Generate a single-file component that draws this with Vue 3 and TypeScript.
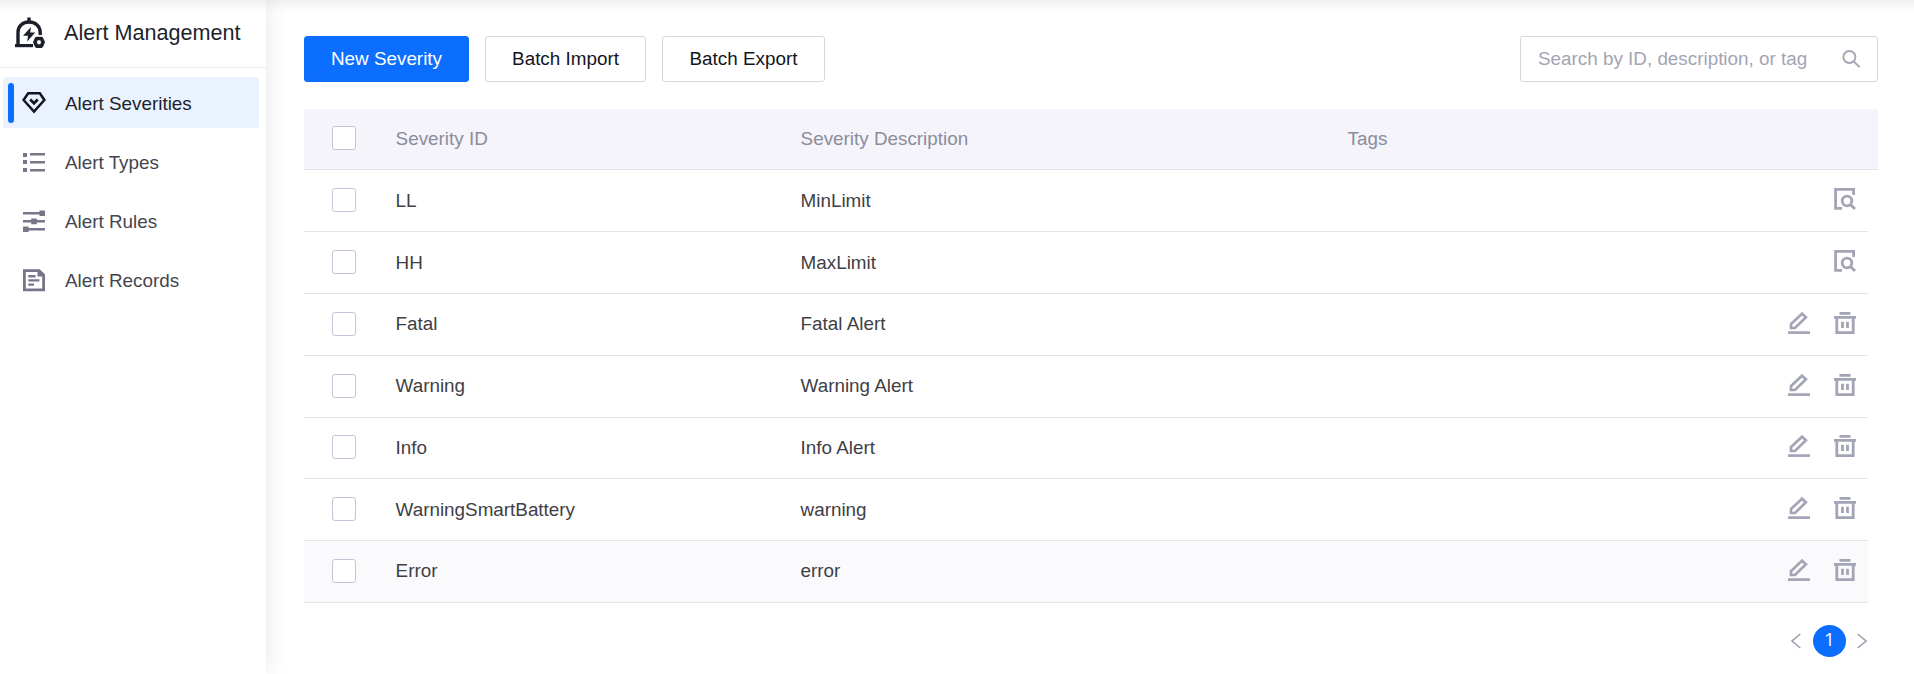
<script setup lang="ts">
import { ref } from 'vue'

interface Severity {
  id: string
  description: string
  builtin: boolean
}

const navItems = [
  { key: 'severities', label: 'Alert Severities' },
  { key: 'types', label: 'Alert Types' },
  { key: 'rules', label: 'Alert Rules' },
  { key: 'records', label: 'Alert Records' },
]
const activeNav = ref('severities')
const query = ref('')

const rows: Severity[] = [
  { id: 'LL', description: 'MinLimit', builtin: true },
  { id: 'HH', description: 'MaxLimit', builtin: true },
  { id: 'Fatal', description: 'Fatal Alert', builtin: false },
  { id: 'Warning', description: 'Warning Alert', builtin: false },
  { id: 'Info', description: 'Info Alert', builtin: false },
  { id: 'WarningSmartBattery', description: 'warning', builtin: false },
  { id: 'Error', description: 'error', builtin: false },
]
const highlighted = ref('Error')
</script>

<template>
  <div class="page">
    <aside class="sidebar">
      <header class="brand">
        <svg class="brand-icon" width="30" height="32" viewBox="0 0 30 32" fill="none">
          <path d="M14 0.5V5" stroke="#1d1f2b" stroke-width="3.4" />
          <path d="M3 28V15.5C3 9 8 5 14 5S25.2 9 25.2 15.5V18" stroke="#1d1f2b" stroke-width="3.4" />
          <path d="M0 28.6H18" stroke="#1d1f2b" stroke-width="3.2" />
          <path d="M16 10L8 18.8H13L12.2 24.4L20.2 15.4H15.2Z" fill="#1d1f2b" />
          <path d="M21.6 21.5H26.4L28.1 25.3L26.4 29.1H21.6L19.9 25.3Z" stroke="#1d1f2b" stroke-width="3.6" stroke-linejoin="round" />
        </svg>
        <span>Alert Management</span>
      </header>
      <nav class="nav">
        <a v-for="item in navItems" :key="item.key" class="nav-item" :class="{ active: item.key === activeNav }" @click="activeNav = item.key">
          <svg v-if="item.key === 'severities'" width="24" height="24" viewBox="0 0 24 24" fill="none" stroke="currentColor" stroke-width="2.5">
            <path d="M6.2 2.3H17.8L22.4 9L12 20.6L1.6 9Z" />
            <path d="M8.2 8.6L12 12.2L15.8 8.6" stroke-width="2.8" />
          </svg>
          <svg v-else-if="item.key === 'types'" width="24" height="24" viewBox="0 0 24 24" fill="currentColor">
            <path d="M1 2h4v4H1zM1 9h4v4H1zM1 17h4v4H1zM8 2h15v2.6H8zM8 10h15v2.6H8zM8 18h15v2.6H8z" />
          </svg>
          <svg v-else-if="item.key === 'rules'" width="24" height="24" viewBox="0 0 24 24" fill="currentColor">
            <path d="M1 2h22v2.6H1zM1 10h22v2.6H1zM1 18h22v2.6H1zM17.5 0.4h5.5v5.6h-5.5zM9.2 8.6h5.6v5.6H9.2zM1 16.4h5.6V22H1z" />
          </svg>
          <svg v-else width="24" height="24" viewBox="0 0 24 24" fill="none" stroke="currentColor" stroke-width="2.8">
            <path d="M2.4 1.6H17L21.6 6.2V20.9H2.4Z" />
            <path d="M15.5 1V7.5H22V5L18 1Z" fill="currentColor" stroke="none" />
            <path d="M6.3 7.2H13.5M6.3 11.4H17.4M6.3 15.6H12" stroke-width="2.4" />
          </svg>
          <span>{{ item.label }}</span>
        </a>
      </nav>
    </aside>

    <main class="content">
      <div class="toolbar">
        <button class="btn primary">New Severity</button>
        <button class="btn import">Batch Import</button>
        <button class="btn export">Batch Export</button>
        <label class="search">
          <input v-model="query" type="text" placeholder="Search by ID, description, or tag" />
          <svg width="18" height="18" viewBox="0 0 18 18" fill="none" stroke="#a3a4b5" stroke-width="1.8">
            <circle cx="7.4" cy="7" r="6" />
            <path d="M11.7 11.3L17.4 17" />
          </svg>
        </label>
      </div>

      <section class="table">
        <div class="row head">
          <span class="check"></span>
          <span>Severity ID</span>
          <span>Severity Description</span>
          <span>Tags</span>
        </div>
        <div v-for="row in rows" :key="row.id" class="row body" :class="{ hover: row.id === highlighted }">
          <span class="check"></span>
          <span>{{ row.id }}</span>
          <span>{{ row.description }}</span>
          <span></span>
          <span class="actions">
            <svg v-if="row.builtin" width="22" height="22" viewBox="0 0 22 22" fill="none" stroke="currentColor" stroke-width="2.8">
              <path d="M19.6 7V1.4H1.6V20.4H8" />
              <circle cx="13" cy="13" r="4.8" />
              <path d="M16.4 16.4L21 21" />
            </svg>
            <template v-else>
              <svg width="22" height="22" viewBox="0 0 22 22" fill="none" stroke="currentColor" stroke-width="2.7">
                <path d="M0 20.6H22" />
                <path d="M3 16V12.1L14 1.7L17.9 5.3L7 16Z" />
              </svg>
              <svg width="22" height="22" viewBox="0 0 22 22" fill="none" stroke="currentColor" stroke-width="2.8">
                <path d="M5.5 1.4H16.5M0 5.4H22M2.8 5V20.6H19.2V5" />
                <path d="M8.5 9.8V16M13.5 9.8V16" />
              </svg>
            </template>
          </span>
        </div>
      </section>

      <footer class="pager">
        <svg width="10" height="16" viewBox="0 0 10 16" fill="none" stroke="#9d9eaf" stroke-width="1.5"><path d="M9.3 1L1 8L9.3 15" /></svg>
        <span class="current">1</span>
        <svg width="10" height="16" viewBox="0 0 10 16" fill="none" stroke="#9d9eaf" stroke-width="1.5"><path d="M0.7 1L9 8L0.7 15" /></svg>
      </footer>
    </main>
  </div>
</template>

<style>
body {
  margin: 0;
  background: #fff;
  overflow: hidden;
}
</style>

<style scoped>
.page {
  position: relative;
  display: flex;
  height: 674px;
  font-family: "Liberation Sans", Arial, sans-serif;
  font-size: 18.85px;
  color: #3f4046;
  overflow: hidden;
}
.page::before {
  content: "";
  position: absolute;
  inset: 0 0 auto 0;
  height: 12px;
  background: linear-gradient(rgba(0, 0, 0, 0.06), rgba(0, 0, 0, 0));
  z-index: 2;
}
.sidebar {
  flex: none;
  width: 266px;
  background: #fff;
  box-shadow: 0 0 22px rgba(0, 0, 0, 0.1);
  z-index: 1;
}
.brand {
  display: flex;
  align-items: center;
  gap: 19px;
  box-sizing: border-box;
  height: 68px;
  padding: 0 0 2px 15px;
  border-bottom: 1px solid #ebebed;
  font-size: 21.6px;
  color: #1d1f2b;
}
.nav {
  display: flex;
  flex-direction: column;
  gap: 8px;
  padding: 9px 7px 0 3px;
}
.nav-item {
  display: flex;
  align-items: center;
  gap: 19px;
  height: 51px;
  padding-left: 19px;
  position: relative;
  border-radius: 3px;
  color: #75768a;
}
.nav-item + .nav-item svg {
  margin-top: 2px;
}
.nav-item span {
  padding-top: 2px;
  color: #44454f;
}
.nav-item + .nav-item span {
  padding-top: 3px;
}
.nav-item.active {
  background: #eaf2ff;
  color: #14151c;
}
.nav-item.active span {
  color: #1d1f2b;
}
.nav-item.active::before {
  content: "";
  position: absolute;
  left: 5px;
  top: 6px;
  width: 6px;
  height: 40px;
  border-radius: 3px;
  background: #0b6eff;
}
.content {
  flex: 1;
  padding: 36px 36px 0 38px;
}
.toolbar {
  display: flex;
  height: 46px;
}
.btn {
  box-sizing: border-box;
  height: 46px;
  padding: 0;
  margin-right: 16px;
  border: 1px solid #d6d6e0;
  border-radius: 3px;
  background: #fff;
  color: #14151c;
  font: inherit;
}
.primary {
  width: 165px;
  border-color: #0b6eff;
  background: #0b6eff;
  color: #fff;
}
.import {
  width: 161px;
}
.export {
  width: 163px;
}
.search {
  display: flex;
  align-items: center;
  box-sizing: border-box;
  width: 358px;
  margin-left: auto;
  padding: 0 17px;
  border: 1px solid #d6d6e0;
  border-radius: 3px;
}
.search input {
  flex: 1;
  min-width: 0;
  padding: 0;
  border: 0;
  outline: 0;
  background: none;
  font: inherit;
}
.search input::placeholder {
  color: #a3a4b5;
  opacity: 1;
}
.table {
  margin-top: 27px;
}
.row {
  display: grid;
  grid-template-columns: 63.6px 405px 547px 1fr auto;
  align-items: center;
  box-sizing: border-box;
  padding-left: 28px;
}
.head {
  height: 61px;
  border-bottom: 1px solid #e0e0e8;
  background: #f4f4fa;
  color: #8b8c9c;
  margin-bottom: 0.6px;
}
.body {
  height: 61.75px;
  margin-right: 10px;
  padding-right: 12px;
  border-bottom: 1px solid #e3e4e8;
}
.body.hover {
  background: #fafafc;
}
.check {
  box-sizing: border-box;
  width: 24px;
  height: 24px;
  margin-bottom: 1px;
  border: 1px solid #c6c4d4;
  border-radius: 3px;
  background: #fff;
}
.head .check {
  margin-bottom: 2px;
}
.actions {
  display: flex;
  gap: 24px;
  margin-bottom: 3px;
  color: #a3a4b5;
}
.pager {
  display: flex;
  align-items: center;
  justify-content: flex-end;
  gap: 12px;
  margin-top: 22px;
  padding-right: 11px;
}
.pager svg:last-child {
  margin-left: -1px;
}
.current {
  width: 33px;
  height: 32px;
  border-radius: 50%;
  background: #0b6eff;
  color: #fff;
  font-family: "Open Sans", sans-serif;
  line-height: 29px;
  text-align: center;
}
</style>
